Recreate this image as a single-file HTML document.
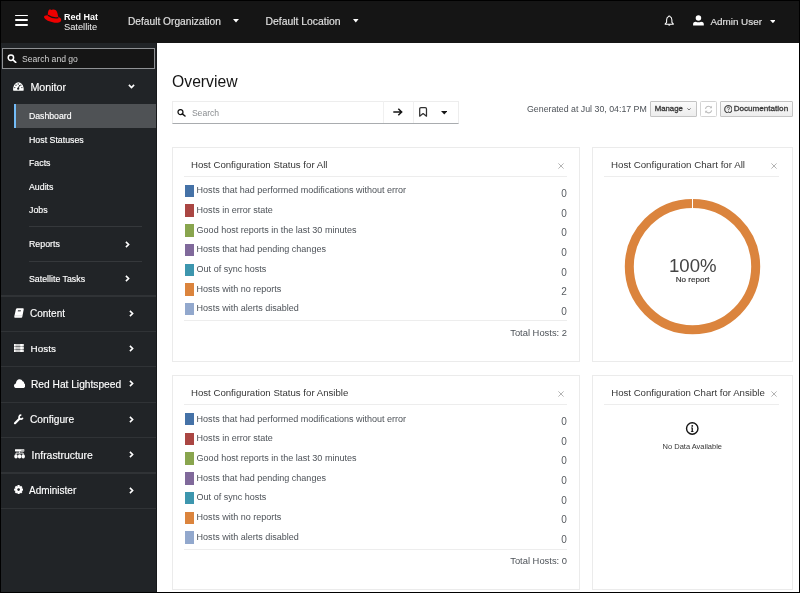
<!DOCTYPE html>
<html><head><meta charset="utf-8"><style>
html,body{margin:0;padding:0;}
body{width:800px;height:593px;overflow:hidden;position:relative;background:#000;font-family:"Liberation Sans", sans-serif;}
#w{position:absolute;left:0;top:0;width:800px;height:593px;filter:blur(0.3px);}
.t{position:absolute;white-space:nowrap;}
</style></head><body><div id="w">
<div style="position:absolute;left:1px;top:1px;width:798px;height:41.5px;background:#151515"></div>
<div style="position:absolute;left:1px;top:42.5px;width:154.6px;height:549.5px;background:#212427"></div>
<div style="position:absolute;left:155.6px;top:42.5px;width:1.4px;height:549.5px;background:#17191b"></div>
<div style="position:absolute;left:157px;top:42.5px;width:642px;height:549.5px;background:#fff"></div>
<div style="position:absolute;left:15px;top:14.6px;width:13.2px;height:1.9px;background:#fff;border-radius:1px"></div>
<div style="position:absolute;left:15px;top:19.3px;width:13.2px;height:1.9px;background:#fff;border-radius:1px"></div>
<div style="position:absolute;left:15px;top:24.1px;width:13.2px;height:1.9px;background:#fff;border-radius:1px"></div>
<svg style="position:absolute;left:40px;top:6px" width="24" height="20" viewBox="0 0 24 20">
<path d="M7.8 9.2 C7.8 7 8.2 4.8 8.9 4 C9.5 3.4 10.5 3.5 11.2 3.9 C11.8 3.6 12.6 3.3 13.6 3.5 C16.4 3.9 17.4 5.5 18.2 10.8 C20.3 11.6 21.3 12.6 21.2 14.2 C21 16.4 17.6 17.1 14.5 16.7 C10 16.1 4.5 13.9 4 11.1 C3.8 9.9 5.5 9 7.8 9.2 Z" fill="#ee0000"/>
<path d="M7.9 9.3 C10.4 11.1 14.6 12.3 18.4 11.6" fill="none" stroke="#151515" stroke-width="1.3"/>
</svg>
<div class="t" style="left:64.00px;top:12.68px;font-size:9.0px;line-height:9.0px;color:#fff;font-weight:bold;">Red Hat</div>
<div class="t" style="left:64.00px;top:22.83px;font-size:9.3px;line-height:9.3px;color:#f2f2f2;">Satellite</div>
<div class="t" style="left:128.00px;top:16.87px;font-size:10.2px;line-height:10.2px;color:#e0e0e0;-webkit-text-stroke:0.15px #e0e0e0;">Default Organization</div>
<div class="t" style="left:265.50px;top:16.90px;font-size:10.4px;line-height:10.4px;color:#e0e0e0;-webkit-text-stroke:0.15px #e0e0e0;">Default Location</div>
<div class="t" style="left:710.40px;top:17.02px;font-size:9.9px;line-height:9.9px;color:#e0e0e0;-webkit-text-stroke:0.15px #e0e0e0;">Admin User</div>
<svg style="position:absolute;left:233px;top:19.4px" width="6" height="3.4" viewBox="0 0 6 3.4"><path d="M0 0 H6 L3.0 3.4 Z" fill="#fff"/></svg>
<svg style="position:absolute;left:353.2px;top:19.3px" width="5.6" height="3.4" viewBox="0 0 5.6 3.4"><path d="M0 0 H5.6 L2.8 3.4 Z" fill="#fff"/></svg>
<svg style="position:absolute;left:769.6px;top:20.0px" width="5.8" height="3.2" viewBox="0 0 5.8 3.2"><path d="M0 0 H5.8 L2.9 3.2 Z" fill="#fff"/></svg>
<svg style="position:absolute;left:663.5px;top:14.5px" width="10.5" height="11" viewBox="0 0 10.5 11">
<path d="M5.25 0.9 C5.7 0.9 5.9 1.2 5.9 1.6 C7.2 2.1 7.9 3.4 7.9 5 V7.3 L9.3 8.8 V9.2 H1.2 V8.8 L2.6 7.3 V5 C2.6 3.4 3.3 2.1 4.6 1.6 C4.6 1.2 4.8 0.9 5.25 0.9 Z" fill="none" stroke="#fff" stroke-width="1.05" stroke-linejoin="round"/>
<path d="M4 9.6 H6.5 C6.5 10.3 6 10.7 5.25 10.7 C4.5 10.7 4 10.3 4 9.6 Z" fill="#fff"/>
</svg>
<svg style="position:absolute;left:693.3px;top:15.2px" width="11" height="11" viewBox="0 0 11 11">
<circle cx="5.45" cy="3.05" r="2.75" fill="#fff"/><path d="M0.1 10.6 V9 C0.1 7.6 1.4 6.9 2.8 6.8 C4.4 7.5 6.5 7.5 8.1 6.8 C9.5 6.9 10.8 7.6 10.8 9 V10.6 Z" fill="#fff"/>
</svg>
<div style="position:absolute;left:2px;top:48px;width:152.6px;height:20.6px;background:#151515;border:1px solid #8f9194;box-sizing:border-box"></div>
<svg style="position:absolute;left:6.6px;top:53.8px" width="10" height="9.4" viewBox="0 0 10 9.4">
<circle cx="3.9" cy="3.7" r="2.7" fill="none" stroke="#fff" stroke-width="1.5"/><path d="M5.8 5.7 L8.7 8.4" stroke="#fff" stroke-width="1.7" stroke-linecap="round"/></svg>
<div class="t" style="left:22.00px;top:54.62px;font-size:8.6px;line-height:8.6px;color:#d2d2d2;">Search and go</div>
<svg style="position:absolute;left:13.4px;top:82.4px" width="11" height="9" viewBox="0 0 11 9">
<path d="M0.3 8.8 C0 7.8 0 6.6 0.3 5.5 C1 2.3 3 0.2 5.4 0.2 C7.8 0.2 9.9 2.3 10.5 5.5 C10.8 6.6 10.8 7.8 10.5 8.8 Z" fill="#fff"/>
<g fill="#212427"><circle cx="1.8" cy="5.6" r="0.65"/><circle cx="3" cy="3.2" r="0.65"/><circle cx="5.2" cy="2" r="0.65"/><circle cx="7.8" cy="3.2" r="0.65"/><circle cx="8.9" cy="5.6" r="0.65"/><circle cx="5.2" cy="6.7" r="1.15"/></g>
<path d="M5.2 6.6 L6.7 3" stroke="#212427" stroke-width="0.9"/></svg>
<div class="t" style="left:30.40px;top:82.04px;font-size:10.7px;line-height:10.7px;color:#fff;-webkit-text-stroke:0.15px #fff;">Monitor</div>
<svg style="position:absolute;left:128px;top:84.4px" width="7" height="5" viewBox="0 0 7 5"><path d="M0.9 0.9 L3.5 3.6 L6.1 0.9" fill="none" stroke="#fff" stroke-width="1.6"/></svg>
<div style="position:absolute;left:14px;top:104.2px;width:142px;height:23.6px;background:#4f5255"></div>
<div style="position:absolute;left:13.9px;top:104.1px;width:2.4px;height:23.6px;background:#73bcf7"></div>
<div class="t" style="left:29.00px;top:112.14px;font-size:8.7px;line-height:8.7px;color:#fff;-webkit-text-stroke:0.15px #fff;">Dashboard</div>
<div class="t" style="left:29.00px;top:136.25px;font-size:8.8px;line-height:8.8px;color:#fff;-webkit-text-stroke:0.15px #fff;">Host Statuses</div>
<div class="t" style="left:29.00px;top:159.05px;font-size:8.8px;line-height:8.8px;color:#fff;-webkit-text-stroke:0.15px #fff;">Facts</div>
<div class="t" style="left:29.00px;top:183.25px;font-size:8.8px;line-height:8.8px;color:#fff;-webkit-text-stroke:0.15px #fff;">Audits</div>
<div class="t" style="left:29.00px;top:206.05px;font-size:8.8px;line-height:8.8px;color:#fff;-webkit-text-stroke:0.15px #fff;">Jobs</div>
<div style="position:absolute;left:29px;top:226.2px;width:113px;height:1.1px;background:#35383b"></div>
<div class="t" style="left:29.00px;top:240.05px;font-size:8.8px;line-height:8.8px;color:#fff;-webkit-text-stroke:0.15px #fff;">Reports</div>
<svg style="position:absolute;left:124.8px;top:241px" width="5" height="7" viewBox="0 0 5 7"><path d="M0.9 0.9 L3.6 3.5 L0.9 6.1" fill="none" stroke="#fff" stroke-width="1.6"/></svg>
<div style="position:absolute;left:29px;top:260.6px;width:113px;height:1.1px;background:#35383b"></div>
<div class="t" style="left:29.00px;top:274.85px;font-size:8.8px;line-height:8.8px;color:#fff;-webkit-text-stroke:0.15px #fff;">Satellite Tasks</div>
<svg style="position:absolute;left:124.8px;top:275px" width="5" height="7" viewBox="0 0 5 7"><path d="M0.9 0.9 L3.6 3.5 L0.9 6.1" fill="none" stroke="#fff" stroke-width="1.6"/></svg>
<div style="position:absolute;left:1px;top:295.4px;width:154.5px;height:1.2px;background:#303336"></div>
<div style="position:absolute;left:1px;top:330.6px;width:154.5px;height:1.2px;background:#303336"></div>
<div style="position:absolute;left:1px;top:366.0px;width:154.5px;height:1.2px;background:#303336"></div>
<div style="position:absolute;left:1px;top:401.6px;width:154.5px;height:1.2px;background:#303336"></div>
<div style="position:absolute;left:1px;top:437.0px;width:154.5px;height:1.2px;background:#303336"></div>
<div style="position:absolute;left:1px;top:472.4px;width:154.5px;height:1.2px;background:#303336"></div>
<div style="position:absolute;left:1px;top:507.8px;width:154.5px;height:1.2px;background:#303336"></div>
<div class="t" style="left:30.00px;top:309.24px;font-size:10.0px;line-height:10.0px;color:#fff;-webkit-text-stroke:0.15px #fff;">Content</div>
<svg style="position:absolute;left:128.6px;top:309.6px" width="5" height="7" viewBox="0 0 5 7"><path d="M0.9 0.9 L3.6 3.5 L0.9 6.1" fill="none" stroke="#fff" stroke-width="1.6"/></svg>
<div class="t" style="left:30.60px;top:344.32px;font-size:9.9px;line-height:9.9px;color:#fff;-webkit-text-stroke:0.15px #fff;">Hosts</div>
<svg style="position:absolute;left:128.6px;top:344.6px" width="5" height="7" viewBox="0 0 5 7"><path d="M0.9 0.9 L3.6 3.5 L0.9 6.1" fill="none" stroke="#fff" stroke-width="1.6"/></svg>
<div class="t" style="left:31.00px;top:379.67px;font-size:10.2px;line-height:10.2px;color:#fff;-webkit-text-stroke:0.15px #fff;">Red Hat Lightspeed</div>
<svg style="position:absolute;left:128.6px;top:380.20000000000005px" width="5" height="7" viewBox="0 0 5 7"><path d="M0.9 0.9 L3.6 3.5 L0.9 6.1" fill="none" stroke="#fff" stroke-width="1.6"/></svg>
<div class="t" style="left:30.00px;top:415.27px;font-size:10.2px;line-height:10.2px;color:#fff;-webkit-text-stroke:0.15px #fff;">Configure</div>
<svg style="position:absolute;left:128.6px;top:415.8px" width="5" height="7" viewBox="0 0 5 7"><path d="M0.9 0.9 L3.6 3.5 L0.9 6.1" fill="none" stroke="#fff" stroke-width="1.6"/></svg>
<div class="t" style="left:31.60px;top:450.50px;font-size:10.4px;line-height:10.4px;color:#fff;-webkit-text-stroke:0.15px #fff;">Infrastructure</div>
<svg style="position:absolute;left:128.6px;top:451.20000000000005px" width="5" height="7" viewBox="0 0 5 7"><path d="M0.9 0.9 L3.6 3.5 L0.9 6.1" fill="none" stroke="#fff" stroke-width="1.6"/></svg>
<div class="t" style="left:29.00px;top:486.24px;font-size:10.0px;line-height:10.0px;color:#fff;-webkit-text-stroke:0.15px #fff;">Administer</div>
<svg style="position:absolute;left:128.6px;top:486.6px" width="5" height="7" viewBox="0 0 5 7"><path d="M0.9 0.9 L3.6 3.5 L0.9 6.1" fill="none" stroke="#fff" stroke-width="1.6"/></svg>
<svg style="position:absolute;left:13.6px;top:308px" width="10.2" height="10.2" viewBox="0 0 10.2 10.2">
<path d="M3.2 0.3 H8.7 C9.4 0.3 9.9 0.8 9.7 1.5 L8.3 8.7 C8.2 9.4 7.7 9.8 7 9.8 H1.4 C0.6 9.8 0.1 9.3 0.3 8.4 L1.9 1.3 C2.1 0.7 2.6 0.3 3.2 0.3 Z" fill="#fff"/>
<path d="M4 2.1 H7 L6.7 3.4 H3.7 Z" fill="#6a6c6e"/><path d="M0.8 7.8 H8.2" stroke="#c8c8c8" stroke-width="0.6"/></svg>
<svg style="position:absolute;left:13.5px;top:343.8px" width="10.8" height="8.6" viewBox="0 0 10.8 8.6">
<g><rect x="0" y="0" width="10.8" height="2.5" fill="#c9c9c9"/><rect x="0" y="3" width="10.8" height="2.5" fill="#c9c9c9"/><rect x="0" y="6" width="10.8" height="2.5" fill="#c9c9c9"/></g>
<g fill="#fff"><rect x="0.1" y="0" width="1.3" height="2.5"/><rect x="0.1" y="3" width="1.3" height="2.5"/><rect x="0.1" y="6" width="1.3" height="2.5"/>
<rect x="6.3" y="0" width="2.4" height="2.5"/><rect x="6.3" y="3" width="2.4" height="2.5"/><rect x="6.3" y="6" width="2.4" height="2.5"/></g></svg>
<svg style="position:absolute;left:13.6px;top:378.5px" width="11.4" height="9.2" viewBox="0 0 11.4 9.2">
<path d="M2.4 9.1 C1 9.1 0 8 0 6.7 C0 5.5 0.8 4.6 1.9 4.4 C2 2 3.5 0.2 5.5 0.2 C7 0.2 8.1 1 8.6 2.2 C10 2.5 10.2 3.5 10.2 4.6 C11 5 11.4 5.8 11.4 6.8 C11.4 8.1 10.4 9.1 9 9.1 Z" fill="#fff"/></svg>
<svg style="position:absolute;left:13px;top:413px" width="11" height="12" viewBox="0 0 11 12">
<path d="M2 10.2 L6.2 6" stroke="#fff" stroke-width="2.2" stroke-linecap="round"/>
<path d="M9.83 4.74 A1.95 1.95 0 1 1 8.34 2.17" fill="none" stroke="#fff" stroke-width="1.6"/></svg>
<svg style="position:absolute;left:13.8px;top:449.2px" width="11" height="9.6" viewBox="0 0 11 9.6">
<rect x="1" y="0.2" width="9.2" height="2.3" rx="0.4" fill="#fff"/><rect x="7.2" y="0.2" width="3" height="2.3" fill="#bdbdbd"/>
<rect x="5.2" y="2.4" width="0.8" height="1.7" fill="#fff"/><path d="M2 5.6 V4.1 H9.2 V5.6" fill="none" stroke="#fff" stroke-width="0.9"/>
<g fill="#fff"><rect x="0.3" y="5.2" width="3.4" height="4.2" rx="1.7"/><rect x="3.9" y="5.2" width="3.4" height="4.2" rx="1.7"/><rect x="7.5" y="5.2" width="3.4" height="4.2" rx="1.7"/></g></svg>
<svg style="position:absolute;left:13.6px;top:485.4px" width="9.2" height="9.2" viewBox="-4.6 -4.6 9.2 9.2">
<g fill="#fff"><rect x="-1.1" y="-4.5" width="2.2" height="2.6" rx="0.4" transform="rotate(0)"/><rect x="-1.1" y="-4.5" width="2.2" height="2.6" rx="0.4" transform="rotate(45)"/><rect x="-1.1" y="-4.5" width="2.2" height="2.6" rx="0.4" transform="rotate(90)"/><rect x="-1.1" y="-4.5" width="2.2" height="2.6" rx="0.4" transform="rotate(135)"/><rect x="-1.1" y="-4.5" width="2.2" height="2.6" rx="0.4" transform="rotate(180)"/><rect x="-1.1" y="-4.5" width="2.2" height="2.6" rx="0.4" transform="rotate(225)"/><rect x="-1.1" y="-4.5" width="2.2" height="2.6" rx="0.4" transform="rotate(270)"/><rect x="-1.1" y="-4.5" width="2.2" height="2.6" rx="0.4" transform="rotate(315)"/><circle r="3.4"/></g><circle r="1.3" fill="#212427"/></svg>
<div class="t" style="left:172.10px;top:74.01px;font-size:15.7px;line-height:15.7px;color:#151515;">Overview</div>
<div style="position:absolute;left:172px;top:101px;width:286.5px;height:22.8px;border:1px solid #ededed;border-bottom:1.6px solid #a9acaf;box-sizing:border-box;background:#fff"></div>
<div style="position:absolute;left:383.3px;top:101px;width:1px;height:21.5px;background:#f0f0f0"></div>
<div style="position:absolute;left:413.3px;top:101px;width:1px;height:21.5px;background:#f0f0f0"></div>
<svg style="position:absolute;left:176.9px;top:109.4px" width="8.8" height="7.2" viewBox="0 0 8.8 7.2">
<circle cx="3.5" cy="3.1" r="2.5" fill="none" stroke="#151515" stroke-width="1.3"/><path d="M5.3 4.9 L8 7" stroke="#151515" stroke-width="1.5" stroke-linecap="round"/></svg>
<div class="t" style="left:191.90px;top:109.22px;font-size:8.6px;line-height:8.6px;color:#8a8d90;">Search</div>
<svg style="position:absolute;left:393.3px;top:108.2px" width="10" height="8" viewBox="0 0 10 8">
<path d="M0.3 4 H8.6 M5.3 0.7 L8.7 4 L5.3 7.3" fill="none" stroke="#151515" stroke-width="1.45"/></svg>
<svg style="position:absolute;left:419.4px;top:107.2px" width="8.2" height="10" viewBox="0 0 8.2 10">
<path d="M0.7 9.2 V2 C0.7 1.2 1.2 0.7 2 0.7 H6.2 C7 0.7 7.5 1.2 7.5 2 V9.2 L4.1 6.6 Z" fill="none" stroke="#303030" stroke-width="1.25" stroke-linejoin="round"/></svg>
<svg style="position:absolute;left:440.6px;top:111.1px" width="6.5" height="3.5" viewBox="0 0 6.5 3.5"><path d="M0 0 H6.5 L3.25 3.5 Z" fill="#151515"/></svg>
<div class="t" style="left:527.00px;top:105.25px;font-size:8.8px;line-height:8.8px;color:#4d5258;">Generated at Jul 30, 04:17 PM</div>
<div style="position:absolute;left:650.4px;top:101.4px;width:46.5px;height:16px;border:1px solid #c4c4c4;border-radius:1px;box-sizing:border-box;background:linear-gradient(#fafafa,#ededed)"></div>
<div class="t" style="left:654.70px;top:105.40px;font-size:7.8px;line-height:7.8px;color:#363636;-webkit-text-stroke:0.3px #363636;">Manage</div>
<svg style="position:absolute;left:686.8px;top:108.4px" width="4" height="2.6" viewBox="0 0 4 2.6"><path d="M0.4 0.4 L2 2 L3.6 0.4" fill="none" stroke="#555" stroke-width="0.8"/></svg>
<div style="position:absolute;left:700.3px;top:101.4px;width:16.4px;height:16.1px;border:1px solid #d4d4d4;border-radius:1.5px;box-sizing:border-box;background:#fff"></div>
<svg style="position:absolute;left:703.7px;top:104.6px" width="9" height="9" viewBox="0 0 9 9">
<path d="M1.4 3.8 C1.9 2.1 3.2 1.2 4.6 1.2 C5.7 1.2 6.6 1.7 7.1 2.5 M7.7 5.3 C7.2 7 5.9 7.9 4.5 7.9 C3.4 7.9 2.5 7.3 2 6.5" fill="none" stroke="#bdbdbd" stroke-width="1.1"/>
<path d="M7.9 0.8 V3.2 H5.5 Z M1.2 8.2 V5.8 H3.6 Z" fill="#bdbdbd"/></svg>
<div style="position:absolute;left:719.6px;top:101.4px;width:73px;height:16px;border:1px solid #c4c4c4;border-radius:1px;box-sizing:border-box;background:linear-gradient(#fafafa,#ededed)"></div>
<svg style="position:absolute;left:723.5px;top:104.8px" width="8.7" height="8.7" viewBox="0 0 10 10">
<circle cx="5" cy="5" r="4.2" fill="none" stroke="#4a4a4a" stroke-width="1.35"/>
<path d="M3.6 3.9 C3.6 3 4.2 2.5 5 2.5 C5.8 2.5 6.4 3 6.4 3.7 C6.4 4.6 5.1 4.8 5.1 5.9" fill="none" stroke="#4a4a4a" stroke-width="1.05"/><circle cx="5.1" cy="7.3" r="0.6" fill="#4a4a4a"/></svg>
<div class="t" style="left:733.70px;top:105.14px;font-size:8.1px;line-height:8.1px;color:#363636;-webkit-text-stroke:0.3px #363636;">Documentation</div>
<div style="position:absolute;left:172px;top:147px;width:408px;height:214.5px;border:1px solid #ebebeb;box-sizing:border-box;background:#fff"></div>
<div class="t" style="left:191.00px;top:159.73px;font-size:9.65px;line-height:9.65px;color:#363636;">Host Configuration Status for All</div>
<svg style="position:absolute;left:558.2px;top:162.9px" width="6" height="6" viewBox="0 0 6 6"><path d="M0.4 0.4 L5.6 5.6 M5.6 0.4 L0.4 5.6" stroke="#b0b0b0" stroke-width="0.95"/></svg>
<div style="position:absolute;left:184.4px;top:176px;width:382.6px;height:1px;background:#ededed"></div>
<div style="position:absolute;left:184.5px;top:184.75px;width:9.4px;height:12.4px;background:#4572A7"></div>
<div class="t" style="left:196.60px;top:186.21px;font-size:9.03px;line-height:9.03px;color:#4d5258;">Hosts that had performed modifications without error</div>
<div class="t" style="right:233.20px;top:189.03px;font-size:10.0px;line-height:10.0px;color:#585c61;">0</div>
<div style="position:absolute;left:184.5px;top:204.45px;width:9.4px;height:12.4px;background:#AA4643"></div>
<div class="t" style="left:196.60px;top:205.91px;font-size:9.03px;line-height:9.03px;color:#4d5258;">Hosts in error state</div>
<div class="t" style="right:233.20px;top:208.72px;font-size:10.0px;line-height:10.0px;color:#585c61;">0</div>
<div style="position:absolute;left:184.5px;top:224.15px;width:9.4px;height:12.4px;background:#89A54E"></div>
<div class="t" style="left:196.60px;top:225.61px;font-size:9.03px;line-height:9.03px;color:#4d5258;">Good host reports in the last 30 minutes</div>
<div class="t" style="right:233.20px;top:228.40px;font-size:10.0px;line-height:10.0px;color:#585c61;">0</div>
<div style="position:absolute;left:184.5px;top:243.85px;width:9.4px;height:12.4px;background:#80699B"></div>
<div class="t" style="left:196.60px;top:245.31px;font-size:9.03px;line-height:9.03px;color:#4d5258;">Hosts that had pending changes</div>
<div class="t" style="right:233.20px;top:248.07px;font-size:10.0px;line-height:10.0px;color:#585c61;">0</div>
<div style="position:absolute;left:184.5px;top:263.55px;width:9.4px;height:12.4px;background:#3D96AE"></div>
<div class="t" style="left:196.60px;top:265.01px;font-size:9.03px;line-height:9.03px;color:#4d5258;">Out of sync hosts</div>
<div class="t" style="right:233.20px;top:267.75px;font-size:10.0px;line-height:10.0px;color:#585c61;">0</div>
<div style="position:absolute;left:184.5px;top:283.25px;width:9.4px;height:12.4px;background:#DB843D"></div>
<div class="t" style="left:196.60px;top:284.71px;font-size:9.03px;line-height:9.03px;color:#4d5258;">Hosts with no reports</div>
<div class="t" style="right:233.20px;top:287.44px;font-size:10.0px;line-height:10.0px;color:#585c61;">2</div>
<div style="position:absolute;left:184.5px;top:302.95px;width:9.4px;height:12.4px;background:#92A8CD"></div>
<div class="t" style="left:196.60px;top:304.41px;font-size:9.03px;line-height:9.03px;color:#4d5258;">Hosts with alerts disabled</div>
<div class="t" style="right:233.20px;top:307.12px;font-size:10.0px;line-height:10.0px;color:#585c61;">0</div>
<div style="position:absolute;left:184.4px;top:320.4px;width:382.6px;height:1px;background:#ededed"></div>
<div class="t" style="right:233.00px;top:327.64px;font-size:9.4px;line-height:9.4px;color:#4d5258;">Total Hosts: 2</div>
<div style="position:absolute;left:172px;top:375.3px;width:408px;height:214.5px;border:1px solid #ebebeb;box-sizing:border-box;background:#fff"></div>
<div class="t" style="left:191.00px;top:388.03px;font-size:9.65px;line-height:9.65px;color:#363636;">Host Configuration Status for Ansible</div>
<svg style="position:absolute;left:558.2px;top:391.20000000000005px" width="6" height="6" viewBox="0 0 6 6"><path d="M0.4 0.4 L5.6 5.6 M5.6 0.4 L0.4 5.6" stroke="#b0b0b0" stroke-width="0.95"/></svg>
<div style="position:absolute;left:184.4px;top:404.3px;width:382.6px;height:1px;background:#ededed"></div>
<div style="position:absolute;left:184.5px;top:413.05px;width:9.4px;height:12.4px;background:#4572A7"></div>
<div class="t" style="left:196.60px;top:414.51px;font-size:9.03px;line-height:9.03px;color:#4d5258;">Hosts that had performed modifications without error</div>
<div class="t" style="right:233.20px;top:417.04px;font-size:10.0px;line-height:10.0px;color:#585c61;">0</div>
<div style="position:absolute;left:184.5px;top:432.75px;width:9.4px;height:12.4px;background:#AA4643"></div>
<div class="t" style="left:196.60px;top:434.21px;font-size:9.03px;line-height:9.03px;color:#4d5258;">Hosts in error state</div>
<div class="t" style="right:233.20px;top:436.72px;font-size:10.0px;line-height:10.0px;color:#585c61;">0</div>
<div style="position:absolute;left:184.5px;top:452.45000000000005px;width:9.4px;height:12.4px;background:#89A54E"></div>
<div class="t" style="left:196.60px;top:453.91px;font-size:9.03px;line-height:9.03px;color:#4d5258;">Good host reports in the last 30 minutes</div>
<div class="t" style="right:233.20px;top:456.40px;font-size:10.0px;line-height:10.0px;color:#585c61;">0</div>
<div style="position:absolute;left:184.5px;top:472.15px;width:9.4px;height:12.4px;background:#80699B"></div>
<div class="t" style="left:196.60px;top:473.61px;font-size:9.03px;line-height:9.03px;color:#4d5258;">Hosts that had pending changes</div>
<div class="t" style="right:233.20px;top:476.08px;font-size:10.0px;line-height:10.0px;color:#585c61;">0</div>
<div style="position:absolute;left:184.5px;top:491.85px;width:9.4px;height:12.4px;background:#3D96AE"></div>
<div class="t" style="left:196.60px;top:493.31px;font-size:9.03px;line-height:9.03px;color:#4d5258;">Out of sync hosts</div>
<div class="t" style="right:233.20px;top:495.75px;font-size:10.0px;line-height:10.0px;color:#585c61;">0</div>
<div style="position:absolute;left:184.5px;top:511.55px;width:9.4px;height:12.4px;background:#DB843D"></div>
<div class="t" style="left:196.60px;top:513.01px;font-size:9.03px;line-height:9.03px;color:#4d5258;">Hosts with no reports</div>
<div class="t" style="right:233.20px;top:515.44px;font-size:10.0px;line-height:10.0px;color:#585c61;">0</div>
<div style="position:absolute;left:184.5px;top:531.25px;width:9.4px;height:12.4px;background:#92A8CD"></div>
<div class="t" style="left:196.60px;top:532.71px;font-size:9.03px;line-height:9.03px;color:#4d5258;">Hosts with alerts disabled</div>
<div class="t" style="right:233.20px;top:535.12px;font-size:10.0px;line-height:10.0px;color:#585c61;">0</div>
<div style="position:absolute;left:184.4px;top:548.7px;width:382.6px;height:1px;background:#ededed"></div>
<div class="t" style="right:233.00px;top:555.94px;font-size:9.4px;line-height:9.4px;color:#4d5258;">Total Hosts: 0</div>
<div style="position:absolute;left:592.3px;top:147px;width:200.5px;height:214.5px;border:1px solid #ebebeb;box-sizing:border-box;background:#fff"></div>
<div class="t" style="left:611.00px;top:159.97px;font-size:9.72px;line-height:9.72px;color:#363636;">Host Configuration Chart for All</div>
<svg style="position:absolute;left:771.3000000000001px;top:162.9px" width="6" height="6" viewBox="0 0 6 6"><path d="M0.4 0.4 L5.6 5.6 M5.6 0.4 L0.4 5.6" stroke="#b0b0b0" stroke-width="0.95"/></svg>
<div style="position:absolute;left:604.4px;top:176px;width:175px;height:1px;background:#ededed"></div>
<svg style="position:absolute;left:622px;top:196px" width="141" height="141" viewBox="0 0 141 141">
<circle cx="70.5" cy="70.6" r="63.2" fill="none" stroke="#DB843D" stroke-width="9"/>
<rect x="70" y="0" width="1" height="12" fill="#fff"/></svg>
<div class="t" style="left:492.80px;width:400px;text-align:center;top:256.86px;font-size:18.6px;line-height:18.6px;color:#444;">100%</div>
<div class="t" style="left:492.60px;width:400px;text-align:center;top:275.84px;font-size:8.1px;line-height:8.1px;color:#363636;-webkit-text-stroke:0.2px #363636;">No report</div>
<div style="position:absolute;left:592.3px;top:375.3px;width:200.5px;height:214.5px;border:1px solid #ebebeb;box-sizing:border-box;background:#fff"></div>
<div class="t" style="left:611.20px;top:388.04px;font-size:9.64px;line-height:9.64px;color:#363636;">Host Configuration Chart for Ansible</div>
<svg style="position:absolute;left:771.2px;top:390.5px" width="6" height="6" viewBox="0 0 6 6"><path d="M0.4 0.4 L5.6 5.6 M5.6 0.4 L0.4 5.6" stroke="#b0b0b0" stroke-width="0.95"/></svg>
<div style="position:absolute;left:604.4px;top:404.3px;width:175px;height:1px;background:#ededed"></div>
<svg style="position:absolute;left:685px;top:421.8px" width="14.5" height="13" viewBox="0 0 14.5 13">
<circle cx="7.25" cy="6.5" r="5.7" fill="none" stroke="#151515" stroke-width="1.4"/>
<circle cx="7.25" cy="3.9" r="0.9" fill="#151515"/><path d="M6 5.6 H7.9 V9.3 H8.6 V10 H5.9 V9.3 H6.6 V6.3 H6 Z" fill="#151515"/></svg>
<div class="t" style="left:492.30px;width:400px;text-align:center;top:443.15px;font-size:7.5px;line-height:7.5px;color:#363636;">No Data Available</div>
</div></body></html>
